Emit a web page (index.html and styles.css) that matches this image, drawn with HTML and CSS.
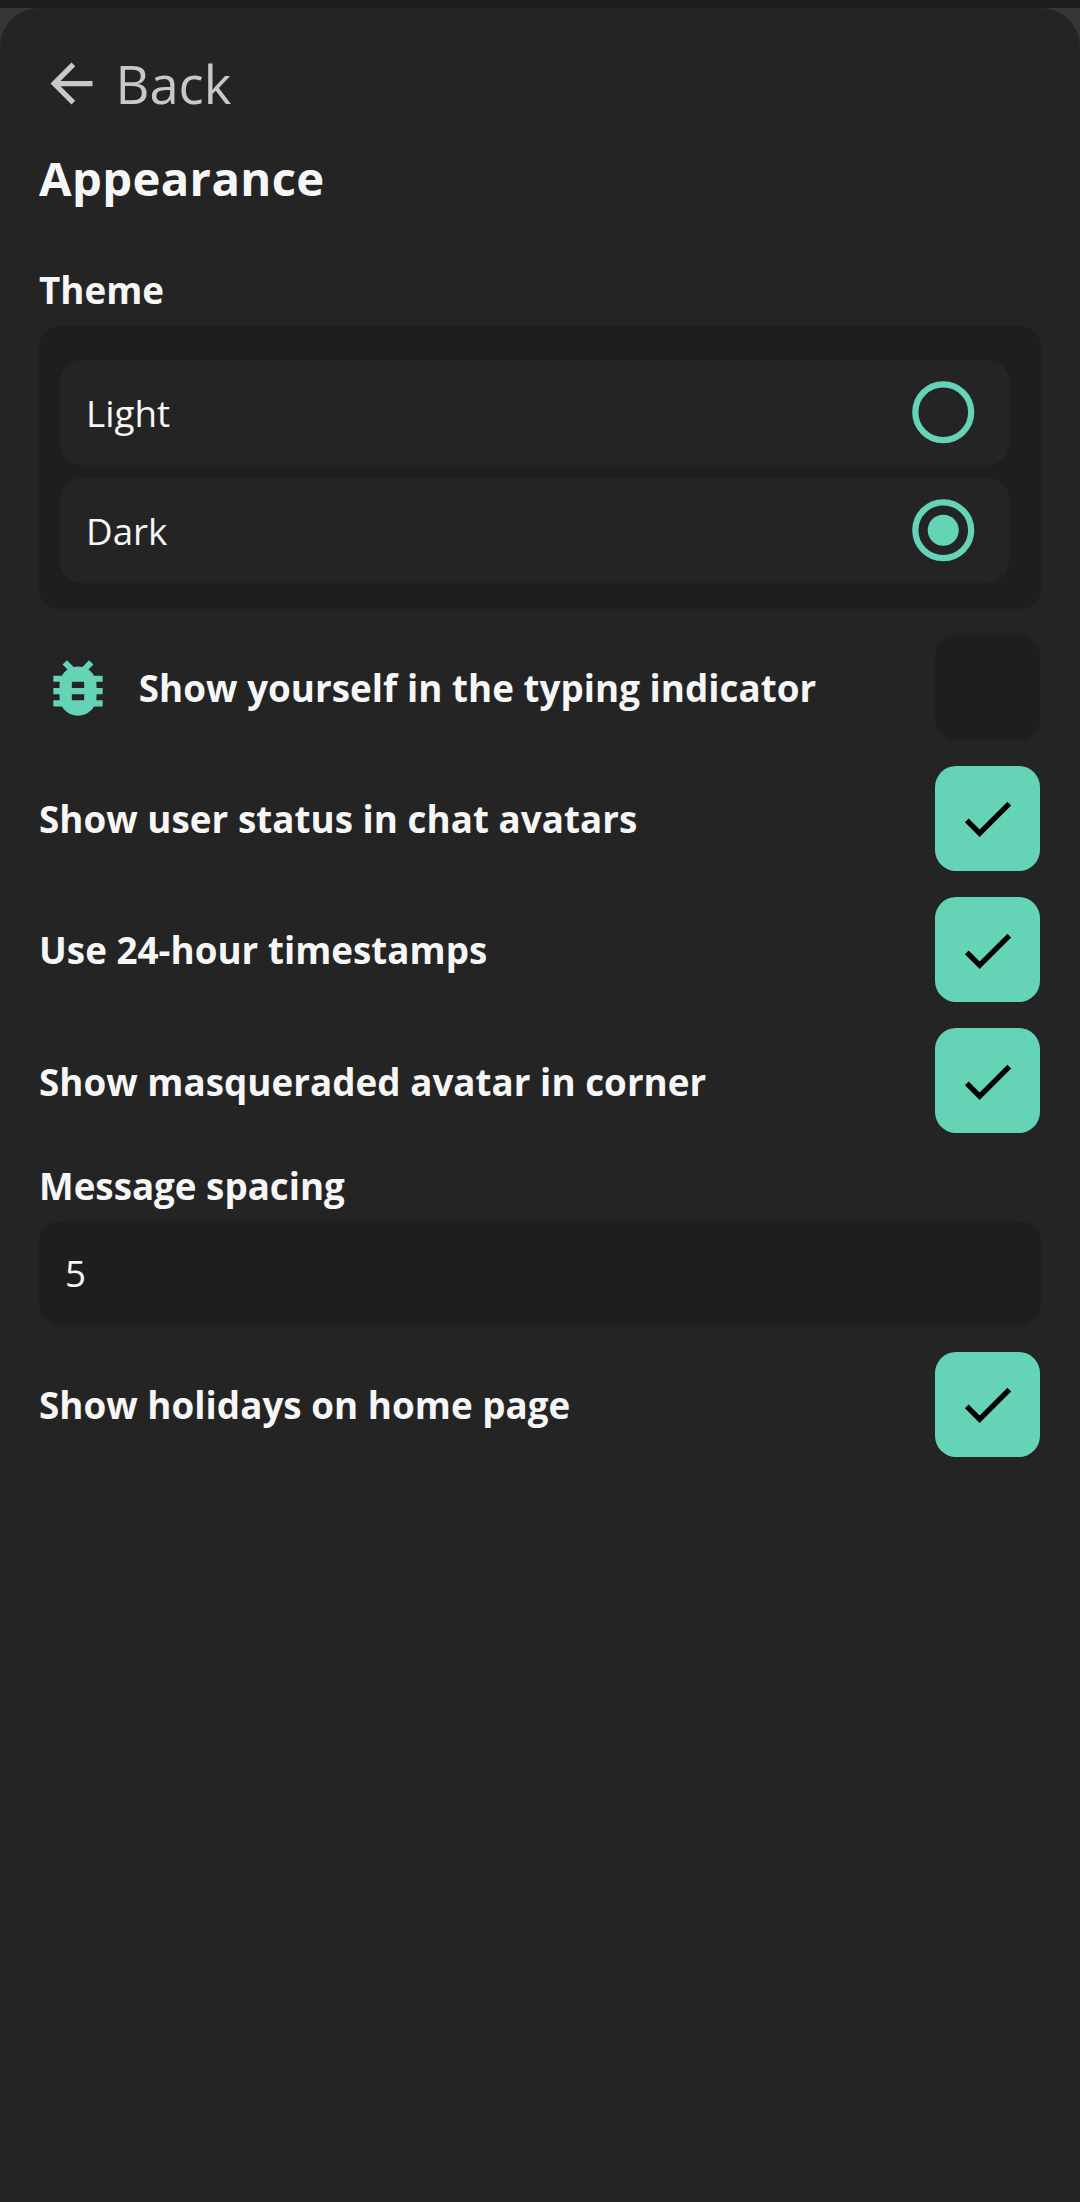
FILE: index.html
```html
<!DOCTYPE html>
<html lang="en">
<head>
<meta charset="utf-8">
<title>Appearance</title>
<link rel="stylesheet" href="styles.css">
</head>
<body>
<svg class="defs" aria-hidden="true">
  <symbol id="check" viewBox="0 0 24 24"><path d="M9 16.17 4.83 12l-1.42 1.41L9 19 21 7l-1.41-1.41z"/></symbol>
</svg>
<main class="sheet">
  <a class="back">
    <svg class="back-icon" viewBox="0 0 24 24"><path d="M20 11H7.83l5.59-5.59L12 4l-8 8 8 8 1.41-1.41L7.83 13H20v-2z"/></svg>
    <span>Back</span>
  </a>
  <h1 class="title">Appearance</h1>

  <h2 class="label">Theme</h2>
  <div class="options">
    <div class="option">
      <span class="option-name">Light</span>
      <svg class="radio" viewBox="0 0 24 24"><circle class="ring" cx="12" cy="12" r="9"/></svg>
    </div>
    <div class="option">
      <span class="option-name">Dark</span>
      <svg class="radio" viewBox="0 0 24 24"><circle class="ring" cx="12" cy="12" r="9"/><circle cx="12" cy="12" r="5"/></svg>
    </div>
  </div>

  <div class="row">
    <svg class="bug" viewBox="0 0 24 24"><path d="M20 8h-2.81c-.45-.78-1.07-1.45-1.82-1.96L17 4.41 15.59 3l-2.17 2.17C12.96 5.06 12.49 5 12 5c-.49 0-.96.06-1.41.17L8.41 3 7 4.41l1.62 1.63C7.88 6.55 7.26 7.22 6.81 8H4v2h2.09c-.05.33-.09.66-.09 1v1H4v2h2v1c0 .34.04.67.09 1H4v2h2.81c1.04 1.79 2.97 3 5.19 3s4.15-1.21 5.19-3H20v-2h-2.09c.05-.33.09-.66.09-1v-1h2v-2h-2v-1c0-.34-.04-.67-.09-1H20V8zm-6 8h-4v-2h4v2zm0-4h-4v-2h4v2z"/></svg>
    <span class="row-name">Show yourself in the typing indicator</span>
    <div class="checkbox"></div>
  </div>
  <div class="row">
    <span class="row-name">Show user status in chat avatars</span>
    <div class="checkbox checked"><svg class="check"><use href="#check"/></svg></div>
  </div>
  <div class="row">
    <span class="row-name">Use 24-hour timestamps</span>
    <div class="checkbox checked"><svg class="check"><use href="#check"/></svg></div>
  </div>
  <div class="row">
    <span class="row-name">Show masqueraded avatar in corner</span>
    <div class="checkbox checked"><svg class="check"><use href="#check"/></svg></div>
  </div>

  <h2 class="label">Message spacing</h2>
  <div class="input">5</div>

  <div class="row">
    <span class="row-name">Show holidays on home page</span>
    <div class="checkbox checked"><svg class="check"><use href="#check"/></svg></div>
  </div>
</main>
</body>
</html>
```

FILE: styles.css
```css
* {
  box-sizing: border-box;
}

body {
  margin: 0;
  height: 2202px;
  padding-top: 8px;
  overflow: hidden;
  background: linear-gradient(#1e1e1e 8px, #363636 8px);
  color: #f6f6f6;
  font: 36.75px/50px "Open Sans", "Noto Sans", sans-serif;
}

.defs {
  display: none;
}

.sheet {
  height: 2194px;
  padding: 40px 39.5px 0 39px;
  border-radius: 39.375px 39.375px 0 0;
  background: #242424;
}

.back {
  display: flex;
  align-items: center;
  gap: 13px;
  height: 71px;
  padding-left: 0.5px;
  color: #c8c8c8;
  font-size: 52.5px;
  line-height: 71px;
}

.back-icon {
  width: 63px;
  height: 63px;
  fill: currentColor;
}

.title {
  margin: 27px 0 55px;
  font-size: 47.25px;
  line-height: 64px;
  font-weight: 700;
  letter-spacing: 0.35px;
}

.label {
  margin: 0 0 10.5px;
  font-size: 36.75px;
  line-height: 50px;
  font-weight: 700;
}

.options {
  display: flex;
  flex-direction: column;
  gap: 13px;
  height: 283px;
  margin-bottom: 26px;
  padding: 34px 32px 0 21px;
  border-radius: 21px;
  background: #1e1e1e;
}

.option {
  display: flex;
  align-items: center;
  justify-content: space-between;
  height: 105px;
  padding: 0 28.5px 0 26px;
  border-radius: 21px;
  background: #242424;
}

.option-name {
  padding-top: 2px;
}

.radio {
  width: 74.5px;
  height: 74.5px;
  fill: #65d3b6;
}

.ring {
  fill: none;
  stroke: #65d3b6;
  stroke-width: 2;
}

.row {
  display: flex;
  align-items: center;
  height: 105px;
  margin-bottom: 26.25px;
  font-weight: 700;
}

.row-name {
  padding-top: 1.5px;
  letter-spacing: 0.04px;
}

.bug {
  width: 74px;
  height: 74px;
  margin: 1px 23.6px 0 2.2px;
  fill: #65d3b6;
}

.checkbox {
  display: flex;
  align-items: center;
  justify-content: center;
  width: 105px;
  height: 105px;
  margin: 0 0.5px 0 auto;
  border-radius: 21px;
  background: #1e1e1e;
}

.checked {
  background: #65d3b6;
}

.check {
  width: 63px;
  height: 63px;
  margin-top: 1px;
  fill: #000;
}

.row + .label {
  margin-top: 27.25px;
}

.input {
  height: 104px;
  margin-bottom: 26.5px;
  padding: 27px 26px;
  border-radius: 21px;
  background: #1e1e1e;
}
```
